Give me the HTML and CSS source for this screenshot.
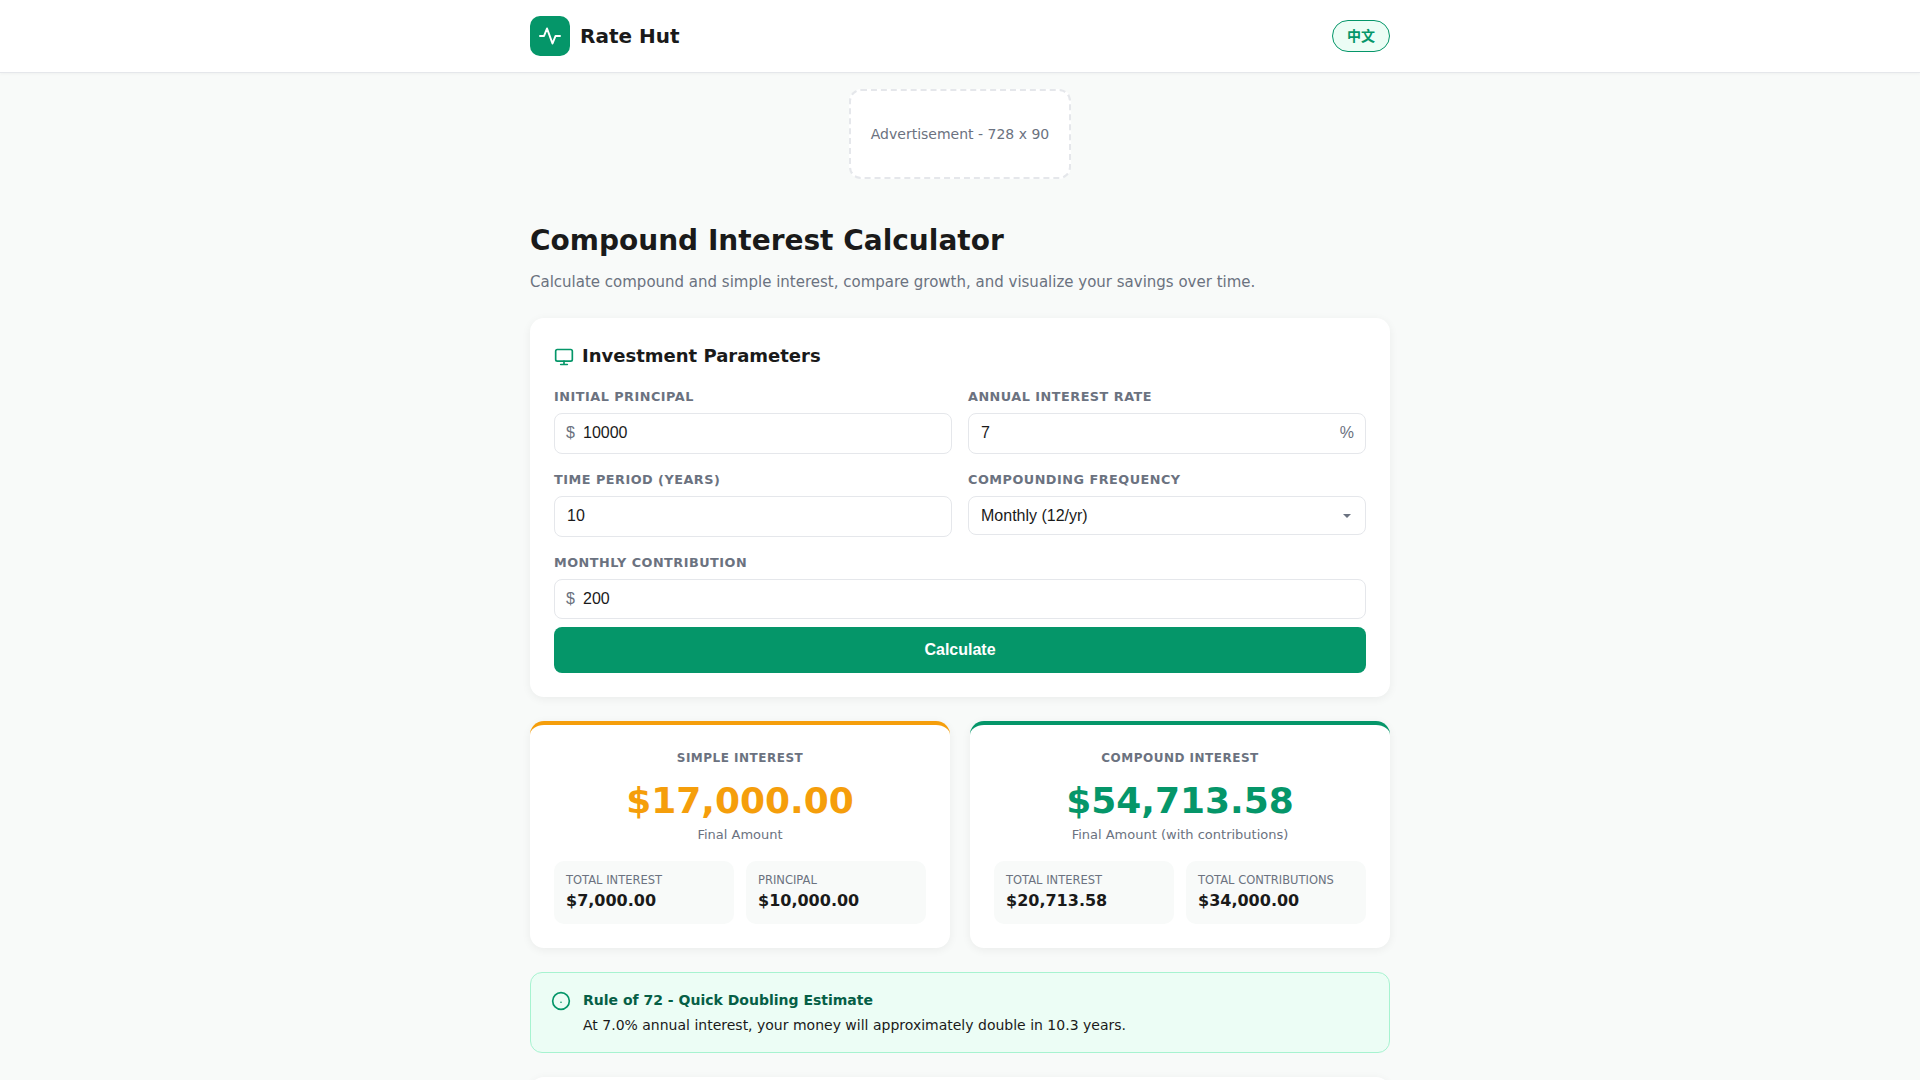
FILE: index.html
```html
<!DOCTYPE html>
<html lang="en">
<head>
  <meta charset="UTF-8">
  <meta name="viewport" content="width=device-width, initial-scale=1.0">
  <title>Compound Interest Calculator - Rate Hut</title>
  <link rel="stylesheet" href="styles.css">
</head>
<body>

<header class="site-header">
  <div class="header-inner">
    <a class="brand" href="#">
      <span class="brand-logo">
        <svg width="24" height="24" viewBox="0 0 24 24" fill="none" stroke="#fff" stroke-width="2" stroke-linecap="round" stroke-linejoin="round"><path d="M2 12h4l3-7.5 5.5 15 3-7.5h4.5"/></svg>
      </span>
      <span class="brand-name">Rate Hut</span>
    </a>
    <a class="lang-btn" href="#">中文</a>
  </div>
</header>

<div class="ad-slot">Advertisement - 728 x 90</div>

<main class="container">
  <h1>Compound Interest Calculator</h1>
  <p class="subtitle">Calculate compound and simple interest, compare growth, and visualize your savings over time.</p>

  <section class="card">
    <h2 class="card-title">
      <svg width="20" height="20" viewBox="0 0 24 24" fill="none" stroke="#059669" stroke-width="2" stroke-linecap="round" stroke-linejoin="round"><rect x="2" y="3" width="20" height="14" rx="2"/><path d="M8 21h8M12 17v4"/></svg>
      Investment Parameters
    </h2>
    <div class="form-grid">
      <div class="field">
        <label>Initial Principal</label>
        <div class="input-wrap">
          <span class="prefix">$</span>
          <input class="has-prefix" type="text" value="10000">
        </div>
      </div>
      <div class="field">
        <label>Annual Interest Rate</label>
        <div class="input-wrap">
          <input type="text" value="7">
          <span class="suffix">%</span>
        </div>
      </div>
      <div class="field">
        <label>Time Period (Years)</label>
        <div class="input-wrap">
          <input type="text" value="10">
        </div>
      </div>
      <div class="field">
        <label>Compounding Frequency</label>
        <div class="select-wrap">
          <select>
            <option>Monthly (12/yr)</option>
            <option>Quarterly (4/yr)</option>
            <option>Annually (1/yr)</option>
          </select>
        </div>
      </div>
      <div class="field field-wide">
        <label>Monthly Contribution</label>
        <div class="input-wrap">
          <span class="prefix">$</span>
          <input class="has-prefix" type="text" value="200">
        </div>
      </div>
    </div>
    <button class="btn-calc">Calculate</button>
  </section>

  <div class="results">
    <section class="result-card simple">
      <div class="result-label">Simple Interest</div>
      <div class="result-value">$17,000.00</div>
      <div class="result-note">Final Amount</div>
      <div class="stats">
        <div class="stat">
          <div class="stat-label">Total Interest</div>
          <div class="stat-value">$7,000.00</div>
        </div>
        <div class="stat">
          <div class="stat-label">Principal</div>
          <div class="stat-value">$10,000.00</div>
        </div>
      </div>
    </section>
    <section class="result-card compound">
      <div class="result-label">Compound Interest</div>
      <div class="result-value">$54,713.58</div>
      <div class="result-note">Final Amount (with contributions)</div>
      <div class="stats">
        <div class="stat">
          <div class="stat-label">Total Interest</div>
          <div class="stat-value">$20,713.58</div>
        </div>
        <div class="stat">
          <div class="stat-label">Total Contributions</div>
          <div class="stat-value">$34,000.00</div>
        </div>
      </div>
    </section>
  </div>

  <div class="rule-box">
    <svg width="20" height="20" viewBox="0 0 24 24" fill="none" stroke="#059669" stroke-width="2" stroke-linecap="round" stroke-linejoin="round"><circle cx="12" cy="12" r="10"/><path d="M12 13.5v.01"/></svg>
    <div>
      <div class="rule-title">Rule of 72 - Quick Doubling Estimate</div>
      <div class="rule-text">At 7.0% annual interest, your money will approximately double in 10.3 years.</div>
    </div>
  </div>

  <section class="card next-card"></section>
</main>

</body>
</html>
```

FILE: styles.css
```css
* { box-sizing: border-box; margin: 0; padding: 0; }
body {
  font-family: "DejaVu Sans", sans-serif;
  background: #f8faf9;
  color: #1a1a1a;
  line-height: 1.6;
}
.site-header {
  background: #fff;
  border-bottom: 1px solid #e5e7eb;
  box-shadow: 0 1px 3px rgba(0, 0, 0, .04);
  height: 73px;
}
.header-inner {
  width: 860px;
  height: 72px;
  margin: 0 auto;
  display: flex;
  align-items: center;
  justify-content: space-between;
}
.brand {
  display: flex;
  align-items: center;
  gap: 10px;
  text-decoration: none;
  color: #1a1a1a;
}
.brand-logo {
  width: 40px;
  height: 40px;
  border-radius: 10px;
  background: #059669;
  display: flex;
  align-items: center;
  justify-content: center;
}
.brand-name { font-size: 20px; font-weight: 700; }
.lang-btn {
  padding: 4px 14px;
  border: 1px solid #059669;
  border-radius: 20px;
  background: #ecfdf5;
  color: #059669;
  font-size: 14px;
  line-height: 22px;
  font-weight: 600;
  font-family: "DejaVu Sans", "Noto Sans CJK SC", sans-serif;
  text-decoration: none;
}
.ad-slot {
  width: 222px;
  height: 90px;
  margin: 16px auto 0;
  background: #fff;
  border: 2px dashed #e5e7eb;
  border-radius: 12px;
  display: flex;
  align-items: center;
  justify-content: center;
  color: #6b7280;
  font-size: 14px;
}
.container {
  width: 860px;
  margin: 0 auto;
  padding-top: 44px;
}
h1 { font-size: 28px; font-weight: 700; line-height: 36.4px; margin-bottom: 11px; }
.subtitle { font-size: 15px; color: #6b7280; margin-bottom: 24px; }
.card {
  background: #fff;
  border-radius: 14px;
  padding: 24px;
  box-shadow: 0 2px 10px rgba(0, 0, 0, .06);
}
.card-title {
  display: flex;
  align-items: center;
  gap: 8px;
  font-size: 18px;
  font-weight: 600;
  margin-bottom: 15.8px;
}
.form-grid {
  display: grid;
  grid-template-columns: 1fr 1fr;
  gap: 16.2px 16px;
}
.field-wide { grid-column: 1 / 3; }
.field label {
  display: block;
  font-size: 12.8px;
  font-weight: 600;
  color: #6b7280;
  text-transform: uppercase;
  letter-spacing: .5px;
  margin-bottom: 5.8px;
}
.input-wrap, .select-wrap { position: relative; }
.input-wrap input, .field select {
  display: block;
  width: 100%;
  height: 40.4px;
  padding: 0 12px;
  border: 1px solid #e5e7eb;
  border-radius: 8px;
  background: #fff;
  color: #1a1a1a;
  font-family: "Liberation Sans", Arial, sans-serif;
  font-size: 16px;
}
.input-wrap input.has-prefix { padding-left: 28px; }
.prefix, .suffix {
  position: absolute;
  top: 7px;
  color: #6b7280;
  font-size: 16px;
  font-family: "Liberation Sans", Arial, sans-serif;
}
.prefix { left: 12px; }
.suffix { right: 12px; }
.field select {
  appearance: none;
  height: 39px;
}
.select-wrap::after {
  content: "";
  position: absolute;
  top: 18px;
  right: 15px;
  border-left: 4px solid transparent;
  border-right: 4px solid transparent;
  border-top: 4px solid #6b7280;
  pointer-events: none;
}
.btn-calc {
  display: block;
  width: 100%;
  height: 46px;
  margin-top: 8px;
  border: none;
  border-radius: 8px;
  background: #059669;
  color: #fff;
  font-family: "Liberation Sans", Arial, sans-serif;
  font-size: 16px;
  font-weight: 700;
  cursor: pointer;
}
.results {
  display: grid;
  grid-template-columns: 1fr 1fr;
  gap: 20px;
  margin-top: 24px;
}
.result-card {
  background: #fff;
  border-radius: 14px;
  border-top: 4px solid #059669;
  padding: 24px;
  text-align: center;
  box-shadow: 0 2px 10px rgba(0, 0, 0, .06);
}
.result-card.simple { border-top-color: #f59e0b; }
.result-label {
  font-size: 12px;
  font-weight: 600;
  color: #6b7280;
  text-transform: uppercase;
  letter-spacing: .5px;
}
.result-value {
  font-size: 36px;
  font-weight: 700;
  line-height: 1.2;
  color: #059669;
  margin: 10px 0 3.5px;
}
.simple .result-value { color: #f59e0b; }
.result-note { font-size: 13px; color: #6b7280; }
.stats {
  display: grid;
  grid-template-columns: 1fr 1fr;
  gap: 12px;
  margin-top: 14.5px;
  text-align: left;
}
.stat {
  background: #f8faf9;
  border-radius: 10px;
  padding: 10px 12px 11px;
}
.stat-label { font-size: 11.5px; color: #6b7280; text-transform: uppercase; }
.stat-value { font-size: 16px; font-weight: 600; line-height: 24px; }
.rule-box {
  display: flex;
  gap: 12px;
  margin-top: 24.4px;
  padding: 16px 20px;
  background: #ecfdf5;
  border: 1px solid #a7f3d0;
  border-radius: 12px;
}
.rule-box svg { flex-shrink: 0; margin-top: 2px; }
.rule-title { font-size: 14px; font-weight: 600; color: #065f46; margin-bottom: 2px; }
.rule-text { font-size: 14px; }
.next-card { margin-top: 24px; min-height: 300px; }
```
